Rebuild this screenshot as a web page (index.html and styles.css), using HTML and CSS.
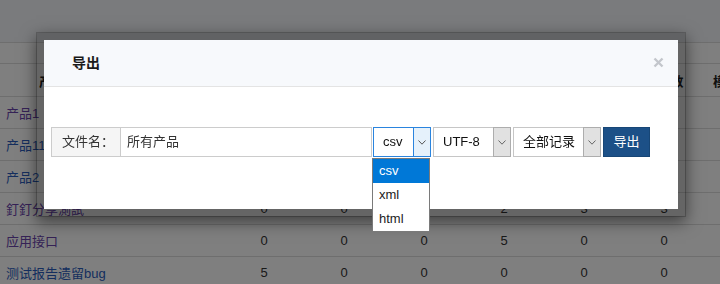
FILE: index.html
```html
<!DOCTYPE html>
<html>
	<head>
		<meta charset="utf-8">
		<title>导出</title>
		<link rel="stylesheet" href="styles.css">
	</head>
	<body>
		<div class="page">
			<div class="toolbar"></div>
			<div class="row row-caption"></div>
			<div class="row row-head">
				<span class="name">产品名称</span>
				<span class="num">Bug总数</span>
				<span class="num">未解决</span>
				<span class="num">已解决</span>
				<span class="num">已关闭</span>
				<span class="num">激活数</span>
				<span class="num">关闭数</span>
				<span class="num last">模</span>
			</div>
			<div class="row">
				<span class="name"><a class="link visited">产品1</a></span>
				<span class="num">3</span><span class="num">1</span><span class="num">2</span><span class="num">0</span><span class="num">0</span><span class="num">1</span>
			</div>
			<div class="row">
				<span class="name"><a class="link">产品11</a></span>
				<span class="num">0</span><span class="num">0</span><span class="num">0</span><span class="num">0</span><span class="num">0</span><span class="num">0</span>
			</div>
			<div class="row">
				<span class="name"><a class="link">产品2</a></span>
				<span class="num">1</span><span class="num">0</span><span class="num">1</span><span class="num">0</span><span class="num">0</span><span class="num">0</span>
			</div>
			<div class="row">
				<span class="name"><a class="link visited">釘釘分享測試</a></span>
				<span class="num">0</span><span class="num">0</span><span class="num">0</span><span class="num">2</span><span class="num">3</span><span class="num">3</span>
			</div>
			<div class="row">
				<span class="name"><a class="link visited">应用接口</a></span>
				<span class="num">0</span><span class="num">0</span><span class="num">0</span><span class="num">5</span><span class="num">0</span><span class="num">0</span>
			</div>
			<div class="row">
				<span class="name"><a class="link">测试报告遗留bug</a></span>
				<span class="num">5</span><span class="num">0</span><span class="num">0</span><span class="num">0</span><span class="num">0</span><span class="num">0</span>
			</div>
		</div>

		<div class="backdrop"></div>

		<div class="modal">
			<div class="modal-header">
				<h4 class="modal-title">导出</h4>
				<span class="close">
					<svg width="11" height="11" viewBox="0 0 11 11"><path d="M1.5 1.5L9.5 9.5M9.5 1.5L1.5 9.5" stroke="#c3c6cc" stroke-width="2.4" fill="none"/></svg>
				</span>
			</div>
			<div class="modal-body">
				<div class="export-form">
					<span class="addon">文件名：</span>
					<div class="file-name">所有产品</div>
					<div class="select select-type">
						<span class="value">csv</span>
						<span class="arrow"><svg width="8" height="5" viewBox="0 0 8 5"><polyline points="0.5,0.5 4,4.2 7.5,0.5" stroke="#555" fill="none"/></svg></span>
					</div>
					<div class="select select-charset">
						<span class="value">UTF-8</span>
						<span class="arrow"><svg width="8" height="5" viewBox="0 0 8 5"><polyline points="0.5,0.5 4,4.2 7.5,0.5" stroke="#666" fill="none"/></svg></span>
					</div>
					<div class="select select-range">
						<span class="value">全部记录</span>
						<span class="arrow"><svg width="8" height="5" viewBox="0 0 8 5"><polyline points="0.5,0.5 4,4.2 7.5,0.5" stroke="#666" fill="none"/></svg></span>
					</div>
					<button class="btn">导出</button>
				</div>
			</div>
			<ul class="options">
				<li class="active">csv</li>
				<li>xml</li>
				<li>html</li>
			</ul>
		</div>
	</body>
</html>
```
FILE: styles.css
```css
html, body {
	height: 100%;
}
body {
	margin: 0;
	overflow: hidden;
	background: #fff;
	color: #333;
	font: 13px "Liberation Sans", "Noto Sans CJK SC", sans-serif;
}
.page {
	width: 720px;
}
.toolbar {
	height: 42px;
	background: #f5f6fb;
	border-bottom: 1px solid #dcdcdc;
}
.row {
	display: flex;
	align-items: center;
	height: 31px;
	border-bottom: 1px solid #dcdcdc;
}
.row-caption {
	height: 20px;
}
.row-head {
	height: 32px;
	font-weight: bold;
	color: #222;
}
.name {
	flex: none;
	width: 224px;
	padding-left: 6px;
	box-sizing: border-box;
	white-space: nowrap;
}
.row-head .name {
	padding-left: 39px;
}
.num {
	flex: none;
	width: 80px;
	text-align: center;
	white-space: nowrap;
}
.row-head .last {
	width: 16px;
	margin-left: 9px;
	text-align: left;
}
.link {
	color: #2b5cbc;
	text-decoration: none;
}
.link.visited {
	color: #6a44ac;
}
.backdrop {
	position: fixed;
	top: 0;
	left: 0;
	right: 0;
	bottom: 0;
	background: rgba(0, 0, 0, 0.5);
}
.modal {
	position: absolute;
	left: 36px;
	top: 32px;
	width: 634px;
	border: 8px solid rgba(0, 0, 0, 0.2);
	background: #fff;
	background-clip: padding-box;
	box-shadow: 0 5px 15px rgba(0, 0, 0, 0.5);
}
.modal-header {
	position: relative;
	height: 46px;
	background: #f7f9fc;
	border-bottom: 1px solid #e4e4e4;
}
.modal-title {
	margin: 0;
	padding-left: 28px;
	font-size: 14px;
	font-weight: bold;
	line-height: 46px;
	color: #1a1a1a;
}
.close {
	position: absolute;
	right: 14px;
	top: 17px;
	width: 11px;
	height: 11px;
	line-height: 0;
}
.modal-body {
	height: 122px;
	box-sizing: border-box;
	padding: 40px 7px 0;
}
.export-form {
	display: flex;
	height: 30px;
	line-height: 28px;
	color: #333;
}
.addon {
	flex: none;
	width: 70px;
	box-sizing: border-box;
	padding-left: 10px;
	border: 1px solid #ccc;
	background: #f5f5f5;
}
.file-name {
	flex: none;
	width: 251px;
	box-sizing: border-box;
	padding-left: 6px;
	border: 1px solid #ccc;
	border-left: 0;
}
.select {
	flex: none;
	display: flex;
	box-sizing: border-box;
	margin-left: 2px;
	border: 1px solid #c6c6c6;
	color: #111;
}
.select .value {
	flex: 1;
	padding-left: 9px;
	white-space: nowrap;
}
.select .arrow {
	flex: none;
	display: flex;
	align-items: center;
	justify-content: center;
	width: 18px;
	box-sizing: border-box;
	margin: -1px -1px -1px 0;
	border: 1px solid #adadad;
	background: #e1e1e1;
}
.select-type {
	width: 58px;
	margin-left: 1px;
	border-color: #2a84de;
}
.select-type .arrow {
	border-color: #2a84de;
	background: #e5f1fb;
}
.select-charset {
	width: 78px;
}
.select-range {
	width: 88px;
}
.btn {
	flex: none;
	width: 47px;
	margin-left: 2px;
	padding: 0;
	border: 1px solid #174676;
	background: #1c5087;
	color: #fff;
	font: inherit;
}
.options {
	position: absolute;
	left: 328px;
	top: 118px;
	width: 58px;
	box-sizing: border-box;
	margin: 0;
	padding: 0;
	list-style: none;
	border: 1px solid #7a7a7a;
	background: #fff;
	color: #222;
}
.options li {
	height: 24px;
	line-height: 24px;
	padding-left: 6px;
}
.options li.active {
	background: #0078d7;
	color: #fff;
}
```
